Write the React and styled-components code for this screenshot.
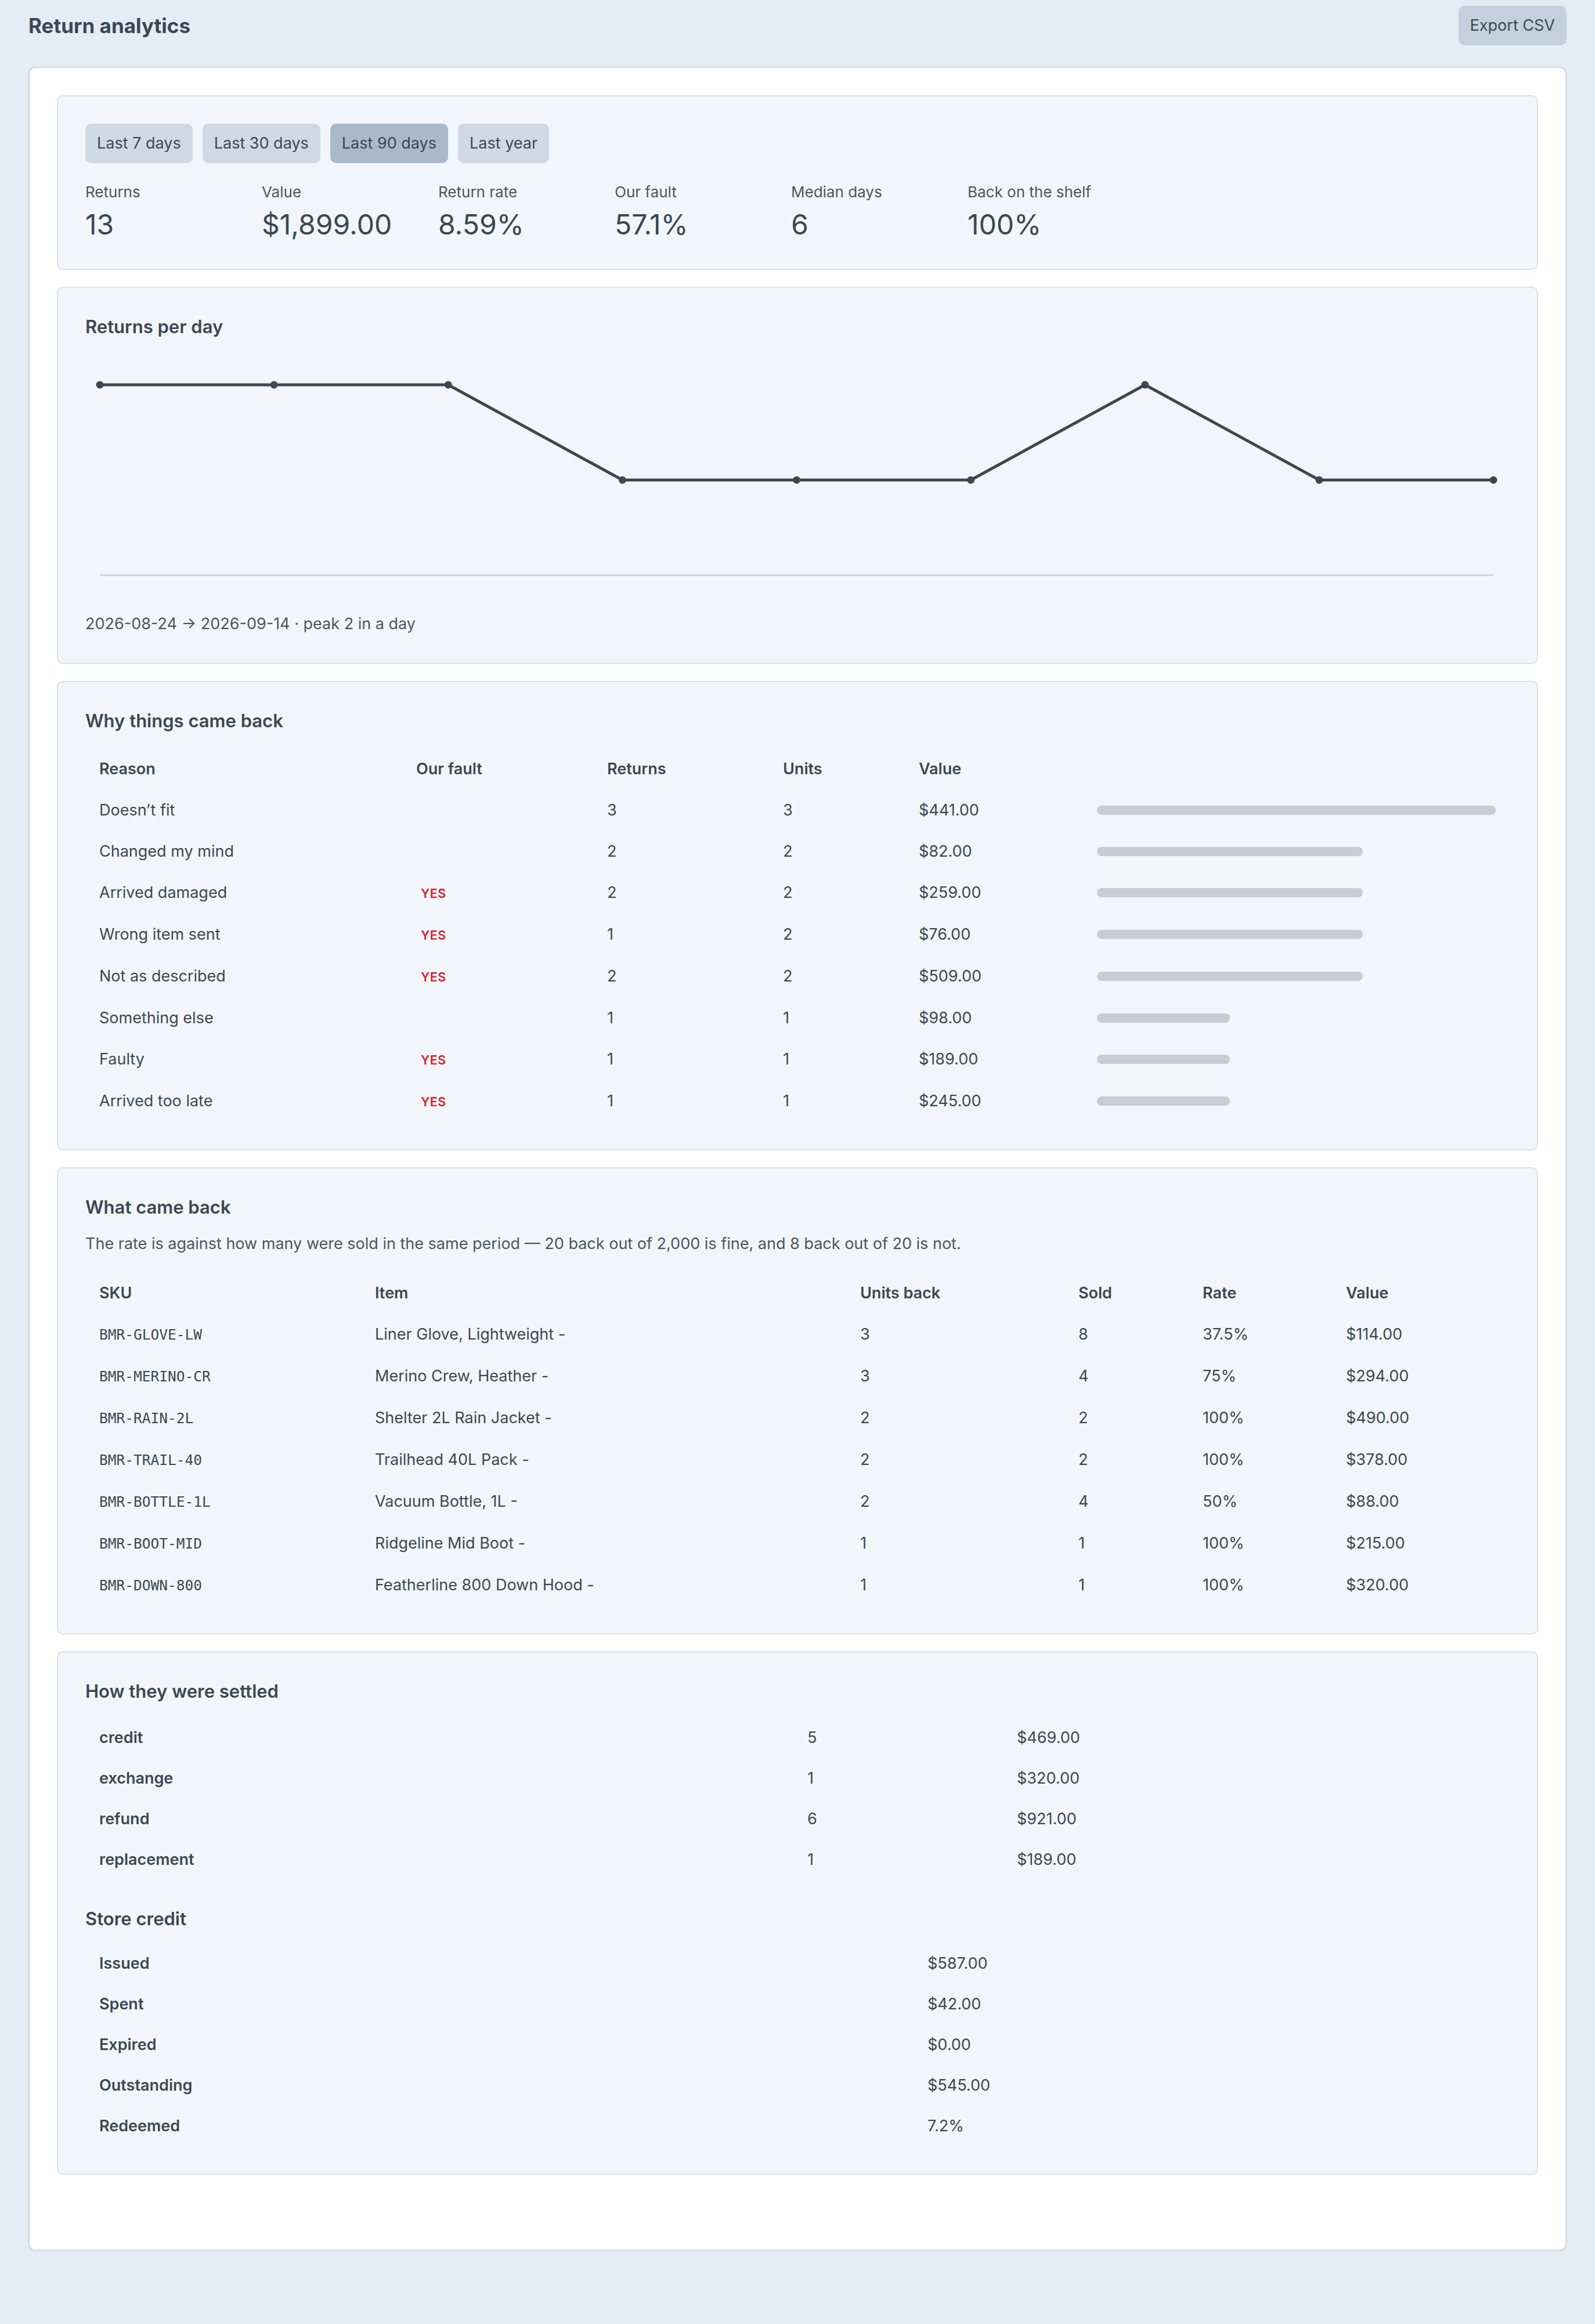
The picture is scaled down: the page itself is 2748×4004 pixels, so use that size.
import styled, { createGlobalStyle } from "styled-components";

const GlobalStyle = createGlobalStyle`
  html, body {
    margin: 0;
    padding: 0;
    background: #e4ecf5;
  }
  body {
    font-family: Inter, "Noto Sans", "Liberation Sans", sans-serif;
    color: #3b4754;
    font-size: 27px;
    line-height: 1.5;
  }
  * { box-sizing: border-box; }
`;

const reasons = [
  { name: "Doesn’t fit", fault: false, returns: 3, units: 3, value: "$441.00" },
  { name: "Changed my mind", fault: false, returns: 2, units: 2, value: "$82.00" },
  { name: "Arrived damaged", fault: true, returns: 2, units: 2, value: "$259.00" },
  { name: "Wrong item sent", fault: true, returns: 1, units: 2, value: "$76.00" },
  { name: "Not as described", fault: true, returns: 2, units: 2, value: "$509.00" },
  { name: "Something else", fault: false, returns: 1, units: 1, value: "$98.00" },
  { name: "Faulty", fault: true, returns: 1, units: 1, value: "$189.00" },
  { name: "Arrived too late", fault: true, returns: 1, units: 1, value: "$245.00" },
];

const skus = [
  ["BMR-GLOVE-LW", "Liner Glove, Lightweight -", 3, 8, "37.5%", "$114.00"],
  ["BMR-MERINO-CR", "Merino Crew, Heather -", 3, 4, "75%", "$294.00"],
  ["BMR-RAIN-2L", "Shelter 2L Rain Jacket -", 2, 2, "100%", "$490.00"],
  ["BMR-TRAIL-40", "Trailhead 40L Pack -", 2, 2, "100%", "$378.00"],
  ["BMR-BOTTLE-1L", "Vacuum Bottle, 1L -", 2, 4, "50%", "$88.00"],
  ["BMR-BOOT-MID", "Ridgeline Mid Boot -", 1, 1, "100%", "$215.00"],
  ["BMR-DOWN-800", "Featherline 800 Down Hood -", 1, 1, "100%", "$320.00"],
];

const settled = [
  ["credit", 5, "$469.00"],
  ["exchange", 1, "$320.00"],
  ["refund", 6, "$921.00"],
  ["replacement", 1, "$189.00"],
];

const storeCredit = [
  ["Issued", "$587.00"],
  ["Spent", "$42.00"],
  ["Expired", "$0.00"],
  ["Outstanding", "$545.00"],
  ["Redeemed", "7.2%"],
];

const stats = [
  ["Returns", "13"],
  ["Value", "$1,899.00"],
  ["Return rate", "8.59%"],
  ["Our fault", "57.1%"],
  ["Median days", "6"],
  ["Back on the shelf", "100%"],
];

const perDay = [2, 2, 2, 1, 1, 1, 2, 1, 1];

const Page = styled.div`
  padding: 10px 49px 128px;
`;

const Header = styled.header`
  display: flex;
  align-items: center;
  justify-content: space-between;
  height: 68px;
`;

const Title = styled.h1`
  margin: 0;
  font-size: 35px;
  font-weight: 700;
  line-height: 1.2;
`;

const Button = styled.button`
  font-family: inherit;
  font-size: 27px;
  line-height: 40px;
  color: #3b4754;
  border: none;
  border-radius: 10px;
  padding: 14px 20px;
  cursor: pointer;
  background: ${(p) => (p.$active ? "#a9b9cc" : p.$strong ? "#c4d0de" : "#cfd9e5")};
`;

const Card = styled.main`
  margin-top: 37px;
  background: #ffffff;
  border: 2px solid #cfd8e3;
  border-radius: 12px;
  box-shadow: 0 1px 3px rgba(60, 80, 110, 0.08);
  padding: 47px 47px 129px;
  display: flex;
  flex-direction: column;
  gap: 29px;
`;

const Panel = styled.section`
  background: #f2f6fb;
  border: 2px solid #dce2e9;
  border-radius: 10px;
  padding: 47px;
`;

const Ranges = styled.div`
  display: flex;
  gap: 17px;
`;

const StatRow = styled.div`
  display: grid;
  grid-template-columns: repeat(6, 304px);
  margin-top: 30px;
`;

const StatLabel = styled.div`
  font-size: 26px;
  line-height: 39px;
  color: #4b5563;
`;

const StatValue = styled.div`
  font-size: 48px;
  line-height: 58px;
  margin-top: 8px;
`;

const SectionTitle = styled.h2`
  margin: ${(p) => (p.$top ? `${p.$top}px` : "0")} 0 ${(p) => (p.$bottom ?? 28)}px;
  font-size: 31px;
  font-weight: 600;
  line-height: 39px;
`;

const Note = styled.p`
  margin: 0;
  font-size: 27px;
  line-height: 40px;
  color: #4b5563;
`;

const ChartSvg = styled.svg`
  display: block;
  width: 100%;
  height: 420px;
  margin: 23px 0 30px;
`;

const Table = styled.table`
  width: 100%;
  border-collapse: collapse;
  table-layout: fixed;
`;

const Th = styled.th`
  text-align: left;
  font-weight: 600;
  padding: 15.5px 24px;
  line-height: 40px;
`;

const Td = styled.td`
  padding: ${(p) => (p.$tight ? "15px 24px" : "15.5px 24px")};
  line-height: 40px;
  vertical-align: middle;
  font-weight: ${(p) => (p.$bold ? 600 : 400)};
  white-space: nowrap;
`;

const Mono = styled.span`
  font-family: "DejaVu Sans Mono", "Liberation Mono", monospace;
  font-size: 24.5px;
`;

const Yes = styled.span`
  margin-left: 8px;
  color: #d7202f;
  font-size: 21.5px;
  font-weight: 600;
  letter-spacing: 0.5px;
`;

const Bar = styled.div`
  height: 16px;
  border-radius: 8px;
  background: #c6cdd6;
`;

const Chart = () => {
  const w = 2455;
  const left = 25;
  const right = 2427;
  const top = 58;
  const base = 386;
  const max = Math.max(...perDay);
  const step = (right - left) / (perDay.length - 1);
  const pts = perDay.map((v, i) => [left + i * step, base - (v / max) * (base - top)]);
  return (
    <ChartSvg viewBox={`0 0 ${w} 420`} preserveAspectRatio="none">
      <line x1={left} x2={right} y1={base} y2={base} stroke="#cdd3da" strokeWidth="3" />
      <polyline
        points={pts.map((p) => p.join(",")).join(" ")}
        fill="none"
        stroke="#3b4754"
        strokeWidth="5"
        strokeLinejoin="round"
      />
      {pts.map(([x, y], i) => (
        <circle key={i} cx={x} cy={y} r="6.5" fill="#3b4754" />
      ))}
    </ChartSvg>
  );
};

// bars follow units, not returns
const maxUnits = Math.max(...reasons.map((r) => r.units));

export default function App() {
  return (
    <>
      <GlobalStyle />
      <Page>
        <Header>
          <Title>Return analytics</Title>
          <Button $strong>Export CSV</Button>
        </Header>

        <Card>
          <Panel>
            <Ranges>
              <Button>Last 7 days</Button>
              <Button>Last 30 days</Button>
              <Button $active>Last 90 days</Button>
              <Button>Last year</Button>
            </Ranges>
            <StatRow>
              {stats.map(([label, value]) => (
                <div key={label}>
                  <StatLabel>{label}</StatLabel>
                  <StatValue>{value}</StatValue>
                </div>
              ))}
            </StatRow>
          </Panel>

          <Panel>
            <SectionTitle $bottom={0}>Returns per day</SectionTitle>
            <Chart />
            <Note>2026-08-24 → 2026-09-14 · peak 2 in a day</Note>
          </Panel>

          <Panel>
            <SectionTitle>Why things came back</SectionTitle>
            <Table>
              <colgroup>
                <col style={{ width: 546 }} />
                <col style={{ width: 329 }} />
                <col style={{ width: 303 }} />
                <col style={{ width: 234 }} />
                <col style={{ width: 307 }} />
                <col />
              </colgroup>
              <thead>
                <tr>
                  <Th>Reason</Th>
                  <Th>Our fault</Th>
                  <Th>Returns</Th>
                  <Th>Units</Th>
                  <Th>Value</Th>
                  <Th />
                </tr>
              </thead>
              <tbody>
                {reasons.map((r) => (
                  <tr key={r.name}>
                    <Td>{r.name}</Td>
                    <Td>{r.fault && <Yes>YES</Yes>}</Td>
                    <Td>{r.returns}</Td>
                    <Td>{r.units}</Td>
                    <Td>{r.value}</Td>
                    <Td>
                      <Bar style={{ width: `${(r.units / maxUnits) * 100}%` }} />
                    </Td>
                  </tr>
                ))}
              </tbody>
            </Table>
          </Panel>

          <Panel>
            <SectionTitle $bottom={24}>What came back</SectionTitle>
            <Note>
              The rate is against how many were sold in the same period — 20 back out of 2,000 is
              fine, and 8 back out of 20 is not.
            </Note>
            <Table style={{ marginTop: 29 }}>
              <colgroup>
                <col style={{ width: 475 }} />
                <col style={{ width: 836 }} />
                <col style={{ width: 376 }} />
                <col style={{ width: 214 }} />
                <col style={{ width: 247 }} />
                <col />
              </colgroup>
              <thead>
                <tr>
                  <Th>SKU</Th>
                  <Th>Item</Th>
                  <Th>Units back</Th>
                  <Th>Sold</Th>
                  <Th>Rate</Th>
                  <Th>Value</Th>
                </tr>
              </thead>
              <tbody>
                {skus.map(([sku, item, back, sold, rate, value]) => (
                  <tr key={sku}>
                    <Td>
                      <Mono>{sku}</Mono>
                    </Td>
                    <Td>{item}</Td>
                    <Td>{back}</Td>
                    <Td>{sold}</Td>
                    <Td>{rate}</Td>
                    <Td>{value}</Td>
                  </tr>
                ))}
              </tbody>
            </Table>
          </Panel>

          <Panel>
            <SectionTitle $bottom={26}>How they were settled</SectionTitle>
            <Table>
              <colgroup>
                <col style={{ width: 1220 }} />
                <col style={{ width: 361 }} />
                <col />
              </colgroup>
              <tbody>
                {settled.map(([kind, count, value]) => (
                  <tr key={kind}>
                    <Td $bold $tight>{kind}</Td>
                    <Td $tight>{count}</Td>
                    <Td $tight>{value}</Td>
                  </tr>
                ))}
              </tbody>
            </Table>

            <SectionTitle $top={47} $bottom={23}>Store credit</SectionTitle>
            <Table>
              <colgroup>
                <col style={{ width: 1427 }} />
                <col />
              </colgroup>
              <tbody>
                {storeCredit.map(([label, value]) => (
                  <tr key={label}>
                    <Td $bold $tight>{label}</Td>
                    <Td $tight>{value}</Td>
                  </tr>
                ))}
              </tbody>
            </Table>
          </Panel>
        </Card>
      </Page>
    </>
  );
}
